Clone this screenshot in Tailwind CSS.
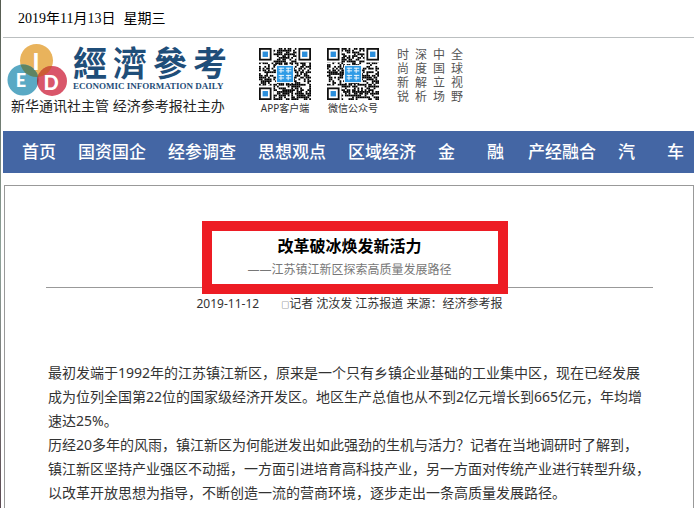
<!DOCTYPE html>
<html lang="zh-CN">
<head>
    <meta charset="UTF-8">
    <meta name="viewport" content="width=device-width, initial-scale=1.0">
    <title>改革破冰焕发新活力 - 经济参考报</title>
    <script src="https://cdn.jsdelivr.net/npm/@tailwindcss/browser@4"></script>
</head>
<body class="min-h-screen bg-white text-[#333] font-['Noto_Sans','Noto_Sans_CJK_SC',sans-serif] flex">
    <!-- page background showing at the edge -->
    <div class="w-px shrink-0 bg-linear-to-b from-[#555b50] via-[#8fa39a] to-[#5b4a52]"></div>

    <div class="flex-1 min-w-0 ml-0.5 flex flex-col">
        <div class="h-[38px] pl-[15px] flex items-center gap-2 border-b border-[#bbbfc0] text-sm text-black font-['Liberation_Serif','Noto_Sans_CJK_SC',serif]">
            <span>2019年11月13日</span>
            <span>星期三</span>
        </div>

        <header class="h-[93px] flex items-start pl-1 pt-1.5">
            <a href="#" class="w-[222px] shrink-0 block">
                <div class="flex items-start">
                    <svg width="60" height="52" viewBox="0 0 60 52" class="shrink-0">
                        <circle cx="29.500" cy="16.500" r="16.500" fill="#e9b35c"/>
                        <circle cx="16" cy="36" r="15.500" fill="#5aa9c4"/>
                        <circle cx="45" cy="37" r="15" fill="#d9566a"/>
                        <clipPath id="top"><circle cx="29.500" cy="16.500" r="16.500"/></clipPath>
                        <clipPath id="left"><circle cx="16" cy="36" r="15.500"/></clipPath>
                        <g clip-path="url(#top)">
                            <circle cx="16" cy="36" r="15.500" fill="#5f8462"/>
                            <circle cx="45" cy="37" r="15" fill="#cc5b35"/>
                        </g>
                        <g clip-path="url(#left)">
                            <circle cx="45" cy="37" r="15" fill="#8a3d45"/>
                        </g>
                        <g fill="#fff" font-family="Lato, sans-serif" font-weight="900" text-anchor="middle">
                            <text x="29" y="26" font-size="23">I</text>
                            <text x="14" y="43" font-size="18">E</text>
                            <text x="44" y="46" font-size="20">D</text>
                        </g>
                    </svg>
                    <div class="pl-1.5">
                        <div class="flex gap-1.5 text-[34px] leading-9 font-bold text-[#1f4e79] font-['Noto_Sans_CJK_TC',sans-serif]">
                            <span>經</span><span>濟</span><span>參</span><span>考</span>
                        </div>
                        <div class="text-[9px] leading-3 font-bold text-[#1f4e79] font-['Liberation_Serif',serif] whitespace-nowrap">ECONOMIC INFORMATION DAILY</div>
                    </div>
                </div>
                <div class="pl-1 text-sm leading-5 text-[#222] whitespace-nowrap">新华通讯社主管 经济参考报社主办</div>
            </a>

            <div class="flex gap-4 pl-[30px] pt-1">
                <figure class="w-[52px]">
                    <svg data-qr="7" width="52" height="52" viewBox="0 0 29 29"></svg>
                    <figcaption class="text-[10px] leading-4 text-center whitespace-nowrap">APP客户端</figcaption>
                </figure>
                <figure class="w-[52px]">
                    <svg data-qr="23" width="52" height="52" viewBox="0 0 29 29"></svg>
                    <figcaption class="text-[10px] leading-4 text-center whitespace-nowrap">微信公众号</figcaption>
                </figure>
            </div>

            <div class="flex gap-1.5 pl-[18px] pt-1 text-xs leading-[14px] text-[#555]">
                <span class="w-3">时尚新锐</span>
                <span class="w-3">深度解析</span>
                <span class="w-3">中国立场</span>
                <span class="w-3">全球视野</span>
            </div>
        </header>

        <nav class="h-[42px] bg-[#4466a4] pl-[19px] flex items-center gap-[22px] text-[17px] font-medium text-white whitespace-nowrap overflow-hidden">
            <a href="#" class="shrink-0">首页</a>
            <a href="#" class="shrink-0">国资国企</a>
            <a href="#" class="shrink-0">经参调查</a>
            <a href="#" class="shrink-0">思想观点</a>
            <a href="#" class="shrink-0">区域经济</a>
            <a href="#" class="shrink-0 w-17 flex gap-8"><span>金</span><span>融</span></a>
            <a href="#" class="shrink-0">产经融合</a>
            <a href="#" class="shrink-0 w-17 flex gap-8"><span>汽</span><span>车</span></a>
        </nav>

        <main class="mt-3 ml-px flex-1 border border-b-0 border-[#999]">
            <div class="ml-[41px] mr-10 pt-12">
                <div class="relative h-[54px] border-b border-[#999] text-center">
                    <h1 class="text-base leading-6 font-bold text-black">改革破冰焕发新活力</h1>
                    <p class="text-xs leading-6 text-[#777]">——江苏镇江新区探索高质量发展路径</p>
                    <div class="absolute left-1/2 -top-[13px] w-[306px] h-[73px] -ml-[148px] border-10 border-[#ed1c24]"></div>
                </div>
                <div class="flex justify-center gap-[22px] pt-1 text-xs leading-6">
                    <span>2019-11-12</span>
                    <span><span class="text-[8px]">□</span>记者 沈汝发 江苏报道 来源：经济参考报</span>
                </div>
            </div>

            <article class="pl-[43px] pr-[42px] pt-11 text-sm leading-6">
                <p>最初发端于1992年的江苏镇江新区，原来是一个只有乡镇企业基础的工业集中区，现在已经发展成为位列全国第22位的国家级经济开发区。地区生产总值也从不到2亿元增长到665亿元，年均增速达25%。</p>
                <p>历经20多年的风雨，镇江新区为何能迸发出如此强劲的生机与活力？记者在当地调研时了解到，镇江新区坚持产业强区不动摇，一方面引进培育高科技产业，另一方面对传统产业进行转型升级，以改革开放思想为指导，不断创造一流的营商环境，逐步走出一条高质量发展路径。</p>
            </article>
        </main>
    </div>

    <script>
        // Fill the two QR codes: random modules, three finders, blue badge in the middle
        function rect(x, y, w, h, fill) {
            return `<rect x="${x}" y="${y}" width="${w}" height="${h}" fill="${fill}"/>`;
        }

        document.querySelectorAll('[data-qr]').forEach(svg => {
            let seed = Number(svg.dataset.qr);
            let out = '';
            for (let y = 0; y < 29; y++) {
                for (let x = 0; x < 29; x++) {
                    seed = (seed * 16807) % 2147483647;
                    if (seed % 100 < 54) out += rect(x, y, 1, 1, '#000');
                }
            }
            [[0, 0], [22, 0], [0, 22]].forEach(([x, y]) => {
                out += rect(x ? x - 1 : 0, y ? y - 1 : 0, 8, 8, '#fff');
                out += rect(x, y, 7, 7, '#111') + rect(x + 1, y + 1, 5, 5, '#fff') + rect(x + 2, y + 2, 3, 3, '#2b8fdc');
            });
            out += rect(9.5, 9.5, 10, 10, '#fff') + rect(10, 10, 9, 9, '#2f9be6');
            [[11, 11], [15, 11], [11, 15], [15, 15]].forEach(([x, y]) => {
                out += rect(x, y, 3, 0.5, '#fff') + rect(x, y + 1.5, 3, 0.5, '#fff') + rect(x + 1, y, 0.5, 3, '#fff');
            });
            svg.innerHTML = out;
        });
    </script>
</body>
</html>
